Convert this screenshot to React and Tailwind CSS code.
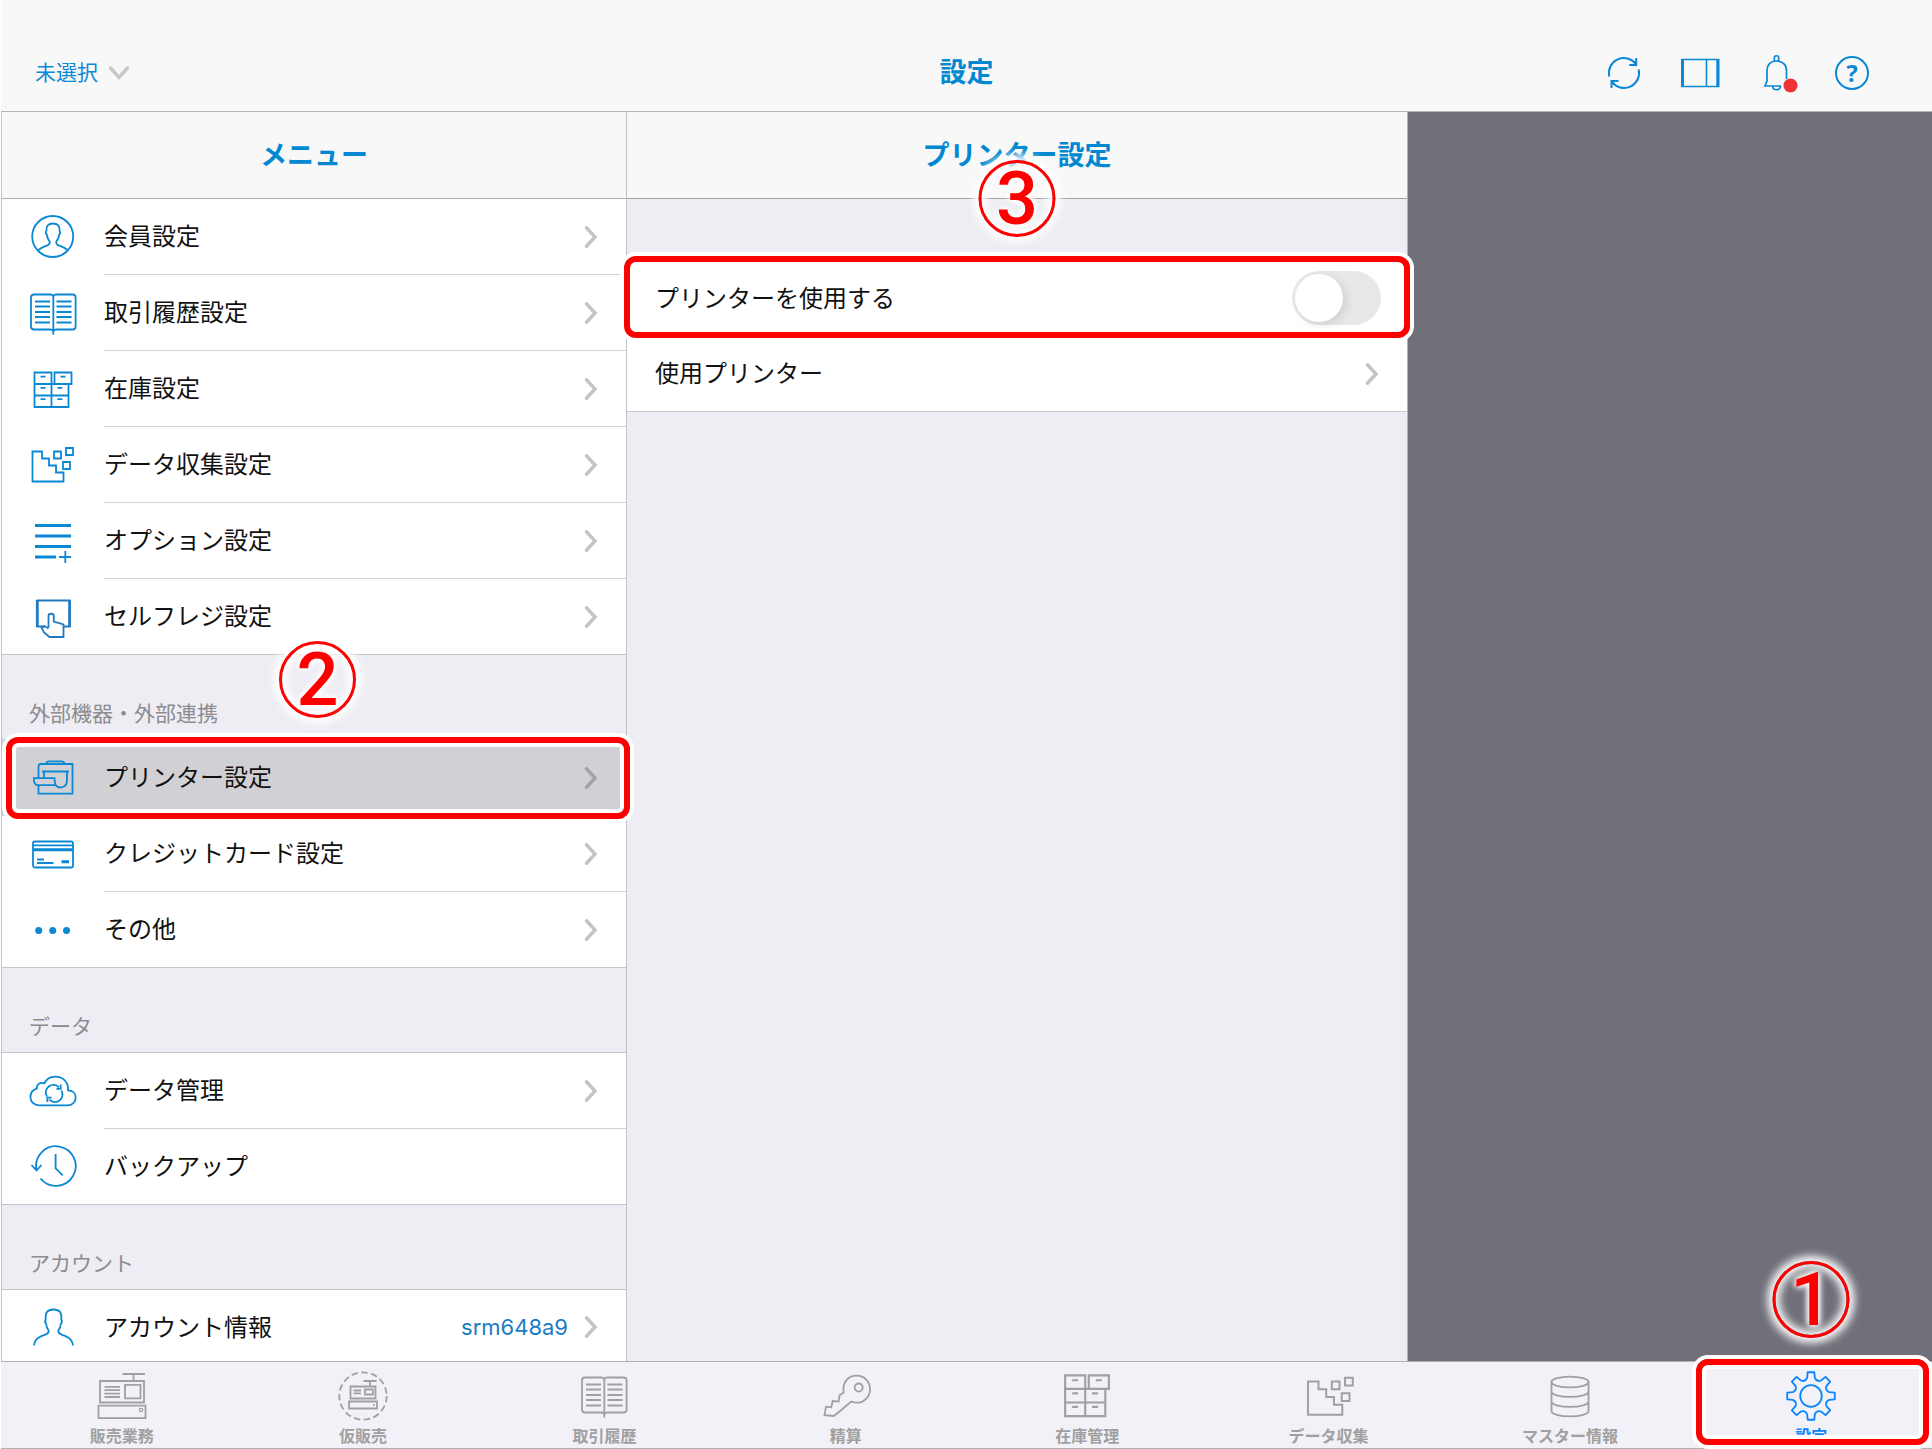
import { useState } from 'react';

// --- Icons ---
const Icon = ({ children, size = 48, box = '0 0 48 48', width = 1.8, className = '' }) => (
  <svg width={size} height={size} viewBox={box} fill="none" stroke="currentColor" strokeWidth={width} className={`shrink-0 ${className}`} aria-hidden="true">
    {children}
  </svg>
);

const MemberShape = () => (
  <>
    <circle cx="23.700" cy="23.500" r="20.500" />
    <path d="M9.500 37c2.500-2.500 6-3.500 9-4.700 2-.8 2.500-1.800 2.200-3.800-2-2.400-2.600-4.500-3-7-1-1-1-2.500-.3-3.500-.6-5 2-7.500 6.600-7.500s7.200 2.500 6.600 7.500c.7 1 .7 2.500-.3 3.500-.4 2.500-1 4.600-3 7-.3 2 .2 3 2.200 3.800 3 1.200 6.500 2.200 9 4.700" />
  </>
);

const BookShape = () => (
  <>
    <path d="M24.300 7.500c-.4-1.500-1.300-2-3-2H5c-2 0-3 1-3 3v29c0 2 1 3 3 3h16.300c1.700 0 2.600.5 3 2 .4-1.500 1.300-2 3-2h16.300c2 0 3-1 3-3v-29c0-2-1-3-3-3H27.300c-1.700 0-2.600.5-3 2zM24.300 7v38.500" />
    <path d="M6 12.500h15M6 17.500h15M6 23h15M6 28h15M6 33.500h15M27.500 12.500h15M27.500 17.500h15M27.500 23h15M27.500 28h15M27.500 33.500h15" />
  </>
);

const CabinetShape = () => (
  <>
    <path d="M5.500 7.500h17V19h-17zM25.500 7.500h17V19h-17zM5.500 19h34v23h-34zM22.500 19v23M5.500 30.500h34" />
    <path d="M11.500 11.700h5M31.500 11.700h5M11.500 22.800h5M28.300 22.800h5M11.500 34.200h5M28.300 34.200h5" />
  </>
);

const DataShape = () => (
  <>
    <path d="M3.500 10.500H13v7h7v7h7v7h7.500v9h-31z" />
    <path d="M25 10.500h7v7h-7zM37 7h7v7h-7zM34 21h7v7h-7z" />
  </>
);

const OptionShape = () => (
  <>
    <path d="M6 8.500h36M6 19h36M6 29.500h36M6 40h21" strokeWidth="3.200" />
    <path d="M30 40h12M36.300 34v12" />
  </>
);

const SelfShape = () => (
  <g className="text-[#2279bd]" stroke="currentColor">
    <path d="M16 33.500H8.500v-26h32v26H35" />
    <path d="M8.200 7v27M40.600 7v27" strokeWidth="2.600" />
    <path d="M19.500 34.500V23c0-3 5.300-3 5.300 0v5.500l9.700 3V44H20.500l-5.500-4.500-2.500-5 3-1.500 4 2.500" />
  </g>
);

const PrinterShape = () => (
  <>
    <path d="M9.500 24V12.500c0-1.500 1-2.500 2.500-2.500h31.500v29.700h-34v-8.500" />
    <path d="M16.500 10c1-2 2-2.700 3.500-2.700h12.500c1.500 0 2.500.7 3.500 2.700zM13 17.500h27M15 18v6M38 18v8c0 5-3 7.500-7 7.500-4 0-5.500-4-5.500-9.300H4.800c0 4.500 1.200 7 4.200 7h18" />
  </>
);

const CardShape = () => (
  <>
    <rect x="4" y="11.500" width="40" height="26" rx="2" />
    <path d="M4 15.300h40M8 29.500h7M8 33h16.500" />
    <path d="M4 19.800h40M32.500 31.800h7.500" strokeWidth="3" />
  </>
);

const DotsShape = () => (
  <g fill="currentColor" stroke="none">
    <circle cx="9.700" cy="24.500" r="3.500" />
    <circle cx="23.700" cy="24.500" r="3.500" />
    <circle cx="37.500" cy="24.500" r="3.500" />
  </g>
);

const CloudShape = () => (
  <>
    <path d="M10 38.300c-5 0-8.600-3.600-8.600-8.300 0-4.300 2.600-7.300 6.400-8.400-.6-3.600 3.200-7.200 7.600-5.200C17.300 12.300 21.700 9.700 26.500 9.700c7.300 0 12.500 5 12.500 12v1.600c4.600 0 7.700 3 7.700 7.200 0 4.500-3.400 7.800-8 7.800z" />
    <path d="M17.900 29.500a7.600 7.600 0 0 1 12-9.200M32.400 23.500a7.600 7.600 0 0 1-12 9.200M31.700 17.500v4.300h-4.300M18.400 35v-4.300h4.300" />
  </>
);

const BackupShape = () => (
  <>
    <path d="M11.500 35.500A19.800 19.800 0 1 0 7.500 27M2.500 22l5 5.500 5-5.500M26.600 11v14.300l7.200 7" />
  </>
);

const PersonShape = () => (
  <path d="M5 41.500c.3-5 2.800-7.500 7-9.200 4-1.600 8-2 7.700-5.600-1.500-2-2.300-4-2.500-6.700-1.200-1-1.200-3-.5-4.500C16 8.500 18.500 5.500 24.500 5.500s8.500 3 7.800 10c.7 1.500.7 3.500-.5 4.500-.2 2.700-1 4.700-2.500 6.700-.3 3.600 3.700 4 7.700 5.600 4.200 1.700 6.500 4.200 7 9.200" />
);

const RegisterShape = () => (
  <>
    <path d="M4 11h44v21.500H4zM2.500 35.700h47v12.500h-47zM29 14.800h15.500v13.500H29zM37.500 11V4M26.500 4H49" />
    <path d="M8.500 16.800H24M8.500 20.200H24M8.500 23.600H24M8.500 27H24" />
    <circle cx="45" cy="40" r="1.600" strokeWidth="1.200" />
  </>
);

const TempSaleShape = () => (
  <>
    <circle cx="26" cy="26" r="23.700" strokeDasharray="6.500 3.430" />
    <path d="M13.500 16.500h25v12h-25zM12 31.500h28v7H12zM28 19.500h8v5h-8zM33 16.500V11M26.500 11H39.500" />
    <path d="M16.500 20.500H24M16.500 23.300H24M36.800 34v1.800" />
  </>
);

const KeyShape = () => (
  <>
    <path d="M23.700 22.500C22 12.500 28 5.700 36.800 5.700c7.500 0 13.200 6 13.200 13.500s-6 13.500-13.200 13.500c-2 0-4-.5-5.500-1.200L14 46l-9.500-.8 1.500-8.500 5.200.6 1.500-6.300 6 .6.9-6.300z" />
    <circle cx="38.700" cy="17.500" r="4" />
  </>
);

const MasterShape = () => (
  <>
    <ellipse cx="26" cy="12" rx="18.500" ry="5.400" />
    <path d="M7.500 12v29c0 3 8 5.400 18.500 5.400S44.500 44 44.500 41V12M7.500 21.500c0 3 8 5.400 18.500 5.400s18.500-2.400 18.500-5.400M7.500 31.500c0 3 8 5.400 18.500 5.400s18.500-2.400 18.500-5.400" />
  </>
);

const polar = (r, deg) => {
  const a = ((deg - 90) * Math.PI) / 180;
  return `${(26 + r * Math.cos(a)).toFixed(2)} ${(26 + r * Math.sin(a)).toFixed(2)}`;
};
const gearPath = [0, 45, 90, 135, 180, 225, 270, 315]
  .map((a, i) => `${i ? 'L' : 'M'}${polar(18.5, a - 12)}L${polar(24, a - 8)}L${polar(24, a + 8)}L${polar(18.5, a + 12)}Q${polar(15, a + 22.5)} ${polar(18.5, a + 33)}`)
  .join('') + 'Z';

const GearShape = () => (
  <>
    <path d={gearPath} strokeLinejoin="round" />
    <circle cx="26" cy="26" r="10.800" />
  </>
);

const Chevron = ({ className = 'text-[#c4c4c8]' }) => (
  <svg width="14" height="24" viewBox="0 0 14 24" fill="none" stroke="currentColor" strokeWidth="3.500" strokeLinecap="round" className={`shrink-0 ${className}`} aria-hidden="true">
    <path d="M2.500 2.800l8.500 9.200-8.500 9.200" />
  </svg>
);

// --- Guide marks drawn over the screen ---
const FocusBox = ({ className }) => (
  <span className={`absolute z-10 pointer-events-none border-6 border-[#ff0000] rounded-xl shadow-[0_0_0_4px_#fff,inset_0_0_0_4px_#fff] ${className}`}></span>
);

const Step = ({ n, className }) => (
  <span className={`absolute z-20 pointer-events-none flex items-center justify-center size-[77px] rounded-full border-3 border-[#ff0000] shadow-[0_0_8px_5px_#fff,inset_0_0_8px_4px_#fff] font-[Roboto,sans-serif] text-[74px] leading-none font-medium text-[#ff0000] [text-shadow:0_0_6px_#fff,0_0_6px_#fff,0_0_8px_#fff] ${className}`}>
    {n}
  </span>
);

// --- Data ---
const menu = [
  {
    title: null,
    items: [
      { label: '会員設定', Shape: MemberShape },
      { label: '取引履歴設定', Shape: BookShape },
      { label: '在庫設定', Shape: CabinetShape },
      { label: 'データ収集設定', Shape: DataShape },
      { label: 'オプション設定', Shape: OptionShape },
      { label: 'セルフレジ設定', Shape: SelfShape },
    ],
  },
  {
    title: '外部機器・外部連携',
    step: 2,
    items: [
      { label: 'プリンター設定', Shape: PrinterShape },
      { label: 'クレジットカード設定', Shape: CardShape },
      { label: 'その他', Shape: DotsShape },
    ],
  },
  {
    title: 'データ',
    items: [
      { label: 'データ管理', Shape: CloudShape },
      { label: 'バックアップ', Shape: BackupShape, noArrow: true },
    ],
  },
  {
    title: 'アカウント',
    items: [{ label: 'アカウント情報', Shape: PersonShape, value: 'srm648a9' }],
  },
];

const tabs = [
  { label: '販売業務', Shape: RegisterShape, box: '0 0 52 52' },
  { label: '仮販売', Shape: TempSaleShape, box: '0 0 52 52' },
  { label: '取引履歴', Shape: BookShape, box: '-2 -2 52 52' },
  { label: '精算', Shape: KeyShape, box: '0 0 52 52' },
  { label: '在庫管理', Shape: CabinetShape, box: '2 3 44 44' },
  { label: 'データ収集', Shape: DataShape, box: '-1 0 47 47' },
  { label: 'マスター情報', Shape: MasterShape, box: '0 0 52 52' },
  { label: '設定', Shape: GearShape, box: '0 0 52 52' },
];

const MenuRow = ({ item, last, selected, onSelect }) => {
  const { label, Shape, value, noArrow } = item;
  return (
    <li className="relative">
      <button
        onClick={onSelect}
        className={`flex w-full h-[76px] items-center pl-[27px] gap-[27px] text-left ${last ? 'border-b border-[#c6c6ca]' : ''} ${selected ? 'bg-[#d1d1d5]' : 'bg-white'}`}
      >
        <Icon className="text-[#0b88d4]"><Shape /></Icon>
        <span className={`flex flex-1 h-full items-center justify-between pr-7 ${last ? '' : 'border-b border-[#d2d2d5]'}`}>
          <span className="pb-[3px]">{label}</span>
          <span className="flex items-center gap-4">
            {value && <span className="font-[Inter,sans-serif] text-[22px] text-[#1a7cc4]">{value}</span>}
            {!noArrow && <Chevron className={selected ? 'text-[#a2a2a6]' : 'text-[#c4c4c8]'} />}
          </span>
        </span>
      </button>
      {selected && <FocusBox className="-top-[3px] -bottom-[3px] left-1 -right-1" />}
    </li>
  );
};

export default function App() {
  const [selected, setSelected] = useState('プリンター設定');
  const [tab, setTab] = useState('設定');
  const [usePrinter, setUsePrinter] = useState(false);

  return (
    <div className="flex flex-col h-screen bg-white pl-px text-2xl text-[#111] font-['Noto_Sans_CJK_JP',sans-serif]">
      {/* Top bar */}
      <header className="grid grid-cols-3 items-center h-28 pt-[34px] shrink-0 bg-[#f8f8f8] border-b border-[#b5b5b8]">
        <div className="pl-[34px]">
          <button className="flex items-center gap-[10px] text-[21px] text-[#0b88d4]">
            <span className="pb-[3px]">未選択</span>
            <svg width="22" height="16" viewBox="0 0 22 16" fill="none" stroke="#c8c8c8" strokeWidth="3.500" strokeLinecap="round" aria-hidden="true">
              <path d="M2.500 3l8.500 9.500 8.500-9.500" />
            </svg>
          </button>
        </div>
        <h1 className="pb-[3px] text-center text-[27px] font-bold text-[#0288d1]">設定</h1>
        <div className="flex justify-end pr-[42px] text-[#0b88d4]">
          <button aria-label="更新" className="flex w-[76px] justify-center">
            <Icon width="2">
              <path d="M9.300 27.500A15 15 0 0 1 36 15.200M38.700 20.500A15 15 0 0 1 12 32.800M36.200 9v7h-7M11.500 39v-7h7" />
            </Icon>
          </button>
          <button aria-label="サイドバー" className="flex w-[76px] justify-center">
            <Icon width="1.600">
              <path d="M6 10.500h36.500v27H6zM30.500 10.500v27" />
              <path d="M6.500 10v28M41.800 10v28" strokeWidth="3" />
            </Icon>
          </button>
          <button aria-label="お知らせ" className="flex w-[76px] justify-center">
            <Icon width="1.700">
              <path d="M34.500 30V21.500c0-5.500-4-9.500-10-9.500s-9.500 4-9.500 9.500V32l-2 5h16M22.300 12V9c0-3 4.400-3 4.400 0v3M20.500 37c.5 5 7.500 5 8 0" />
              <circle cx="38.500" cy="36.500" r="7" fill="#ef3338" stroke="none" />
            </Icon>
          </button>
          <button aria-label="ヘルプ" className="flex w-[76px] justify-center items-center h-12">
            <span className="flex items-center justify-center size-[34px] rounded-full border-2 border-[#0b88d4] font-['Noto_Sans',sans-serif] text-[24px] leading-none font-bold">?</span>
          </button>
        </div>
      </header>

      {/* Panels */}
      <main className="grid grid-cols-[626fr_781fr_524fr] grid-rows-[minmax(0,1fr)] flex-1 min-h-0 overflow-hidden">
        <nav className="bg-[#eeedf3] border-x border-[#c2c2c6]">
          <h2 className="flex h-[87px] pb-[3px] items-center justify-center bg-[#f8f8f8] border-b border-[#adadb1] text-[27px] font-bold text-[#0288d1]">メニュー</h2>
          {menu.map((group, g) => (
            <section key={g}>
              {group.title && (
                <h3 className="relative flex h-[85px] items-end pl-[27px] pb-[13px] border-b border-[#c6c6ca] text-[21px] leading-7 text-[#8b8b90]">
                  {group.title}
                  {group.step && <Step n={group.step} className="left-[277px] -top-[14px]" />}
                </h3>
              )}
              <ul>
                {group.items.map((item, i) => (
                  <MenuRow
                    key={item.label}
                    item={item}
                    last={i === group.items.length - 1}
                    selected={item.label === selected}
                    onSelect={() => setSelected(item.label)}
                  />
                ))}
              </ul>
            </section>
          ))}
        </nav>

        <section className="bg-[#eeedf3] border-r border-[#b0b0b6]">
          <h2 className="relative flex h-[87px] mb-[61px] pb-[3px] items-center justify-center bg-[#f8f8f8] border-b border-[#a3a3a8] text-[27px] font-bold text-[#0288d1]">
            プリンター設定
            <Step n={3} className="left-1/2 -translate-x-1/2 top-12" />
          </h2>
          <div className="relative">
            <label className="flex h-[76px] items-center justify-between pl-7 pr-[26px] bg-white">
              <span className="pb-[3px]">プリンターを使用する</span>
              <input
                type="checkbox"
                role="switch"
                checked={usePrinter}
                onChange={(e) => setUsePrinter(e.target.checked)}
                className="appearance-none w-[89px] h-[54px] p-[3px] rounded-full bg-[#e8e8ea] checked:bg-[#34c759] before:block before:size-12 before:rounded-full before:bg-white before:shadow-[4px_3px_10px_rgba(0,0,0,0.1)] checked:before:ml-auto"
              />
            </label>
            <FocusBox className="-top-1 -bottom-[2px] -left-[3px] -right-[3px]" />
          </div>
          <button className="flex w-full h-[76px] items-center justify-between px-7 bg-white border-b border-[#c9c9cd]">
            <span className="pb-[3px]">使用プリンター</span>
            <Chevron />
          </button>
        </section>

        <div className="bg-[#70707a]"></div>
      </main>

      {/* Tab bar */}
      <footer className="flex shrink-0 bg-[#f2f1f7] border-y border-[#b0b0b4]">
        {tabs.map(({ label, Shape, box }) => (
          <div key={label} className="relative flex-1">
            <button
              onClick={() => setTab(label)}
              className={`flex flex-col w-full items-center gap-[3px] pt-2 pb-[3px] text-base leading-5 font-bold ${tab === label ? 'text-[#0a84ff]' : 'text-[#a0a0a0]'}`}
            >
              <Icon size={52} box={box}><Shape /></Icon>
              {label}
            </button>
            {tab === label && (
              <>
                <FocusBox className="-top-[3px] bottom-[3px] left-[5px] right-[3px]" />
                <Step n={1} className="left-1/2 -translate-x-1/2 -top-[101px]" />
              </>
            )}
          </div>
        ))}
      </footer>
    </div>
  );
}
